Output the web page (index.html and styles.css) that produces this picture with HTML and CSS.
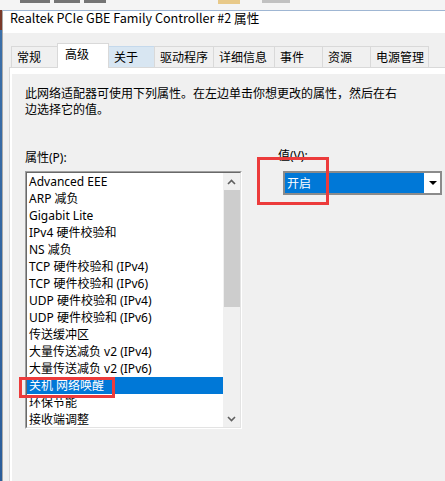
FILE: index.html
```html
<!DOCTYPE html>
<html lang="zh-CN">
<head>
<meta charset="utf-8">
<title>Realtek PCIe GBE Family Controller #2 属性</title>
<link rel="stylesheet" href="styles.css">
</head>
<body>
<div class="screen">
  <div class="behind">
    <span class="behind-blot b1"></span>
    <span class="behind-blot b2"></span>
    <span class="behind-blot b3"></span>
    <span class="behind-icon"></span>
    <span class="behind-blot b4"></span>
  </div>
  <div class="main">
    <div class="desk"></div>
    <div class="window">
      <div class="titlebar">Realtek PCIe GBE Family Controller #2 属性</div>
      <div class="tabs">
        <div class="tab t1">常规</div>
        <div class="tab t2 sel">高级</div>
        <div class="tab t3 hover">关于</div>
        <div class="tab t4">驱动程序</div>
        <div class="tab t5">详细信息</div>
        <div class="tab t6">事件</div>
        <div class="tab t7">资源</div>
        <div class="tab t8">电源管理</div>
      </div>
      <div class="pane">
        <div class="page">
          <p class="desc">此网络适配器可使用下列属性。在左边单击你想更改的属性，然后在右<br>边选择它的值。</p>
          <div class="cols">
            <div class="col-left">
              <div class="label">属性(P):</div>
              <div class="listbox">
                <div class="listbox-inner">
                  <ul class="items">
                    <li>Advanced EEE</li>
                    <li>ARP 减负</li>
                    <li>Gigabit Lite</li>
                    <li>IPv4 硬件校验和</li>
                    <li>NS 减负</li>
                    <li>TCP 硬件校验和 (IPv4)</li>
                    <li>TCP 硬件校验和 (IPv6)</li>
                    <li>UDP 硬件校验和 (IPv4)</li>
                    <li>UDP 硬件校验和 (IPv6)</li>
                    <li>传送缓冲区</li>
                    <li>大量传送减负 v2 (IPv4)</li>
                    <li>大量传送减负 v2 (IPv6)</li>
                    <li class="selected">关机 网络唤醒</li>
                    <li>环保节能</li>
                    <li>接收端调整</li>
                  </ul>
                  <div class="scrollbar">
                    <div class="sb-btn">
                      <svg width="9" height="6" viewBox="0 0 9 6"><polyline points="1,5 4.5,1.5 8,5" fill="none" stroke="#606060" stroke-width="1.6"/></svg>
                    </div>
                    <div class="sb-track"><div class="sb-thumb"></div></div>
                    <div class="sb-btn">
                      <svg width="9" height="6" viewBox="0 0 9 6"><polyline points="1,1 4.5,4.5 8,1" fill="none" stroke="#606060" stroke-width="1.6"/></svg>
                    </div>
                  </div>
                </div>
              </div>
            </div>
            <div class="col-right">
              <div class="label label-value">值(V):</div>
              <div class="combo">
                <div class="combo-value">开启</div>
                <div class="combo-btn"><span class="tri"></span></div>
              </div>
            </div>
          </div>
        </div>
      </div>
    </div>
  </div>
  <div class="mark mark-list"></div>
  <div class="mark mark-value"></div>
</div>
</body>
</html>
```

FILE: styles.css
```css
* { box-sizing: border-box; }

html, body {
  margin: 0;
  padding: 0;
  width: 445px;
  height: 481px;
  overflow: hidden;
  background: #f0f0f0;
  font-family: "Noto Sans", "Noto Sans CJK SC", sans-serif;
  font-size: 12px;
  color: #000;
}

.screen {
  position: relative;
  width: 445px;
  height: 481px;
  overflow: hidden;
}

.behind {
  height: 10px;
  background: #f4f4f4;
  overflow: hidden;
  display: flex;
  align-items: flex-start;
}

.behind-blot {
  height: 3px;
  background: #4a4a4a;
  opacity: 0.75;
}

.behind-blot.b1 { width: 30px; margin-left: 20px; }
.behind-blot.b2 { width: 26px; margin-left: 4px; }
.behind-blot.b3 { width: 22px; margin-left: 4px; }
.behind-blot.b4 { width: 28px; margin-left: 22px; background: #b0b0b0; }

.behind-icon {
  width: 22px;
  height: 4px;
  margin-left: 112px;
  background: #e8c989;
}

.main {
  display: flex;
  height: 471px;
}

.desk {
  width: 2px;
  flex: none;
  background: linear-gradient(to bottom, #7a3a2a 0, #7a3a2a 20px, #3b6fa8 20px, #2a5d9a 100%);
}

.window {
  width: 470px;
  flex: none;
  border-left: 1px solid #a9a9a9;
  border-top: 1px solid #9fb6d3;
  background: #f0f0f0;
}

.titlebar {
  height: 22px;
  background: #fff;
  padding-left: 7px;
  line-height: 14px;
  font-size: 12.6px;
  font-family: "Noto Sans CJK SC", sans-serif;
  white-space: nowrap;
  color: #000;
}

.tabs {
  display: flex;
  align-items: flex-end;
  height: 34px;
  padding-left: 8px;
}

.tab {
  height: 21px;
  line-height: 19px;
  padding-left: 5px;
  border: 1px solid #d9d9d9;
  border-bottom: none;
  background: #f0f0f0;
  margin-left: -1px;
  white-space: nowrap;
  font-family: "Noto Sans CJK SC", sans-serif;
}

.tab.t1 { margin-left: 0; width: 47px; }
.tab.t2 { width: 52px; }
.tab.t3 { width: 47px; }
.tab.t4 { width: 60px; }
.tab.t5 { width: 62px; }
.tab.t6 { width: 49px; }
.tab.t7 { width: 49px; }
.tab.t8 { width: 59px; }

.tab.sel {
  position: relative;
  z-index: 2;
  height: 25px;
  margin-bottom: -1px;
  background: #fff;
  padding-left: 7px;
  line-height: 20px;
}

.tab.hover {
  background: #d8e6f2;
  border-color: #c5d9ec;
}

.pane {
  margin-left: 6px;
  margin-right: 6px;
  border: 1px solid #d9d9d9;
  background: #fff;
  padding: 6px 0 0 2px;
  height: 440px;
}

.page {
  background: #f0f0f0;
  height: 100%;
  padding: 11px 0 0 13px;
}

.desc {
  margin: 0;
  line-height: 16px;
  font-family: "Noto Sans CJK SC", sans-serif;
  white-space: nowrap;
}

.cols {
  display: flex;
  gap: 36px;
  margin-top: 33px;
}

.col-left {
  width: 217px;
  flex: none;
}

.label {
  line-height: 15px;
  height: 15px;
  white-space: nowrap;
}

.listbox {
  margin-top: 6px;
  width: 217px;
  height: 258px;
  border: 1px solid;
  border-color: #a0a0a0 #ffffff #ffffff #a0a0a0;
}

.listbox-inner {
  display: flex;
  height: 100%;
  border: 1px solid;
  border-color: #696969 #e3e3e3 #e3e3e3 #696969;
  background: #fff;
  overflow: hidden;
}

.items {
  list-style: none;
  margin: 0;
  padding: 0;
  flex: 1;
  min-width: 0;
}

.items li {
  height: 17px;
  line-height: 17px;
  padding-left: 2px;
  white-space: nowrap;
}

.items li.selected {
  background: #0078d7;
  color: #fff;
}

.scrollbar {
  width: 17px;
  flex: none;
  background: #f0f0f0;
  display: flex;
  flex-direction: column;
}

.sb-btn {
  height: 17px;
  flex: none;
  display: flex;
  align-items: center;
  justify-content: center;
}

.sb-track {
  flex: 1;
}

.sb-thumb {
  height: 117px;
  margin-left: 1px;
  background: #cdcdcd;
}

.col-right {
  flex: none;
}

.label-value {
  margin-top: -2px;
}

.combo {
  margin-top: 8px;
  margin-left: 5px;
  width: 159px;
  height: 24px;
  border: 2px solid #8b8b8b;
  display: flex;
  background: #fff;
}

.combo-value {
  flex: 1;
  background: #0078d7;
  color: #fff;
  line-height: 20px;
  padding-left: 2px;
  margin: 0 1px 0 0;
  font-family: "Noto Sans CJK SC", sans-serif;
}

.combo-btn {
  width: 15px;
  flex: none;
  display: flex;
  align-items: center;
  justify-content: center;
  background: #fff;
}

.tri {
  width: 0;
  height: 0;
  border-left: 4px solid transparent;
  border-right: 4px solid transparent;
  border-top: 4px solid #000;
}

.mark {
  position: absolute;
  border: 3px solid #ec3b3b;
  pointer-events: none;
}

.mark-list {
  left: 19px;
  top: 377px;
  width: 96px;
  height: 21px;
}

.mark-value {
  left: 257px;
  top: 157px;
  width: 72px;
  height: 48px;
}
```
